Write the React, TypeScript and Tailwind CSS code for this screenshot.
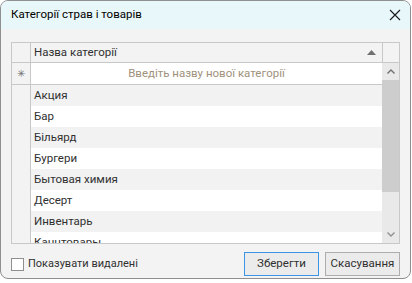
const rows = [
  'Акция',
  'Бар',
  'Більярд',
  'Бургери',
  'Бытовая химия',
  'Десерт',
  'Инвентарь',
  'Канцтовары',
]

export default function App() {
  return (
    <div className="w-[412px] h-[283px] bg-white font-['Roboto',sans-serif] text-[11.5px] text-[#303030]">
      <div className="w-[411px] h-[279px] rounded-lg border border-[#8f8f8f] bg-[#f3f3f3] overflow-hidden flex flex-col">
        {/* title bar */}
        <div className="h-[28px] shrink-0 bg-[#e8f7f9] flex items-center justify-between pl-[10px] pr-[8px]">
          <span className="text-[11.5px] text-black">Категорії страв і товарів</span>
          <svg width="12" height="12" viewBox="0 0 12 12" className="mr-[1px]">
            <path d="M1 1 L11 11 M11 1 L1 11" stroke="#1a1a1a" strokeWidth="1.1" />
          </svg>
        </div>

        <div className="flex-1 px-[10px] pt-[13px] flex flex-col">
          {/* grid */}
          <div className="w-[389px] h-[202px] border border-[#c8c8c8] bg-[#f3f3f3] flex flex-col overflow-hidden">
            {/* header */}
            <div className="h-[20px] shrink-0 flex border-b border-[#c8c8c8]">
              <div className="w-[19px] border-r border-[#c8c8c8]" />
              <div className="flex-1 flex items-center justify-between pl-[3px] pr-[6px] border-r border-[#c8c8c8]">
                <span>Назва категорії</span>
                <svg width="9" height="5" viewBox="0 0 9 5">
                  <path d="M0 5 L4.5 0 L9 5 Z" fill="#707070" />
                </svg>
              </div>
              <div className="w-[16px]" />
            </div>

            <div className="flex-1 flex min-h-0">
              <div className="flex-1 flex flex-col min-w-0">
                {/* new row */}
                <div className="h-[22px] shrink-0 flex border-b border-[#c8c8c8] bg-white">
                  <div className="w-[19px] border-r border-[#c8c8c8] bg-[#f3f3f3] flex items-center justify-center text-[10px] text-[#707070]">
                    ✳
                  </div>
                  <div className="flex-1 flex items-center justify-center text-[#a0917c]">
                    Введіть назву нової категорії
                  </div>
                </div>
                {rows.map((r, i) => (
                  <div key={i} className="h-[21px] shrink-0 flex">
                    <div className="w-[19px] border-r border-[#c8c8c8] bg-[#f3f3f3]" />
                    <div
                      className={
                        'flex-1 flex items-center pl-[3px] ' +
                        (i % 2 === 0 ? 'bg-[#f2f2f2]' : 'bg-white')
                      }
                    >
                      {r}
                    </div>
                  </div>
                ))}
              </div>

              {/* scrollbar */}
              <div className="w-[17px] shrink-0 bg-[#e9e9e9] flex flex-col">
                <div className="h-[17px] flex items-center justify-center">
                  <svg width="8" height="5" viewBox="0 0 8 5">
                    <path d="M0.5 4.5 L4 1 L7.5 4.5" stroke="#707070" strokeWidth="1.4" fill="none" />
                  </svg>
                </div>
                <div className="flex-1 flex flex-col">
                  <div className="h-[112px] bg-[#cdcdcd]" />
                </div>
                <div className="h-[17px] flex items-center justify-center">
                  <svg width="8" height="5" viewBox="0 0 8 5">
                    <path d="M0.5 0.5 L4 4 L7.5 0.5" stroke="#909090" strokeWidth="1.4" fill="none" />
                  </svg>
                </div>
              </div>
            </div>
          </div>

          {/* footer */}
          <div className="flex items-center justify-between mt-[8px]">
            <div className="flex items-center gap-[4px] leading-[16px]">
              <div className="w-[13px] h-[13px] border border-[#8f8f8f] bg-white" />
              <span className="text-[11px]">Показувати видалені</span>
            </div>
            <div className="flex gap-[6px]">
              <button className="w-[75px] h-[24px] border border-[#3c94e6] bg-[#ebebeb] text-[#303030]">
                Зберегти
              </button>
              <button className="w-[75px] h-[24px] border border-[#adadad] bg-[#ebebeb] text-[#303030]">
                Скасування
              </button>
            </div>
          </div>
        </div>
      </div>
    </div>
  )
}
